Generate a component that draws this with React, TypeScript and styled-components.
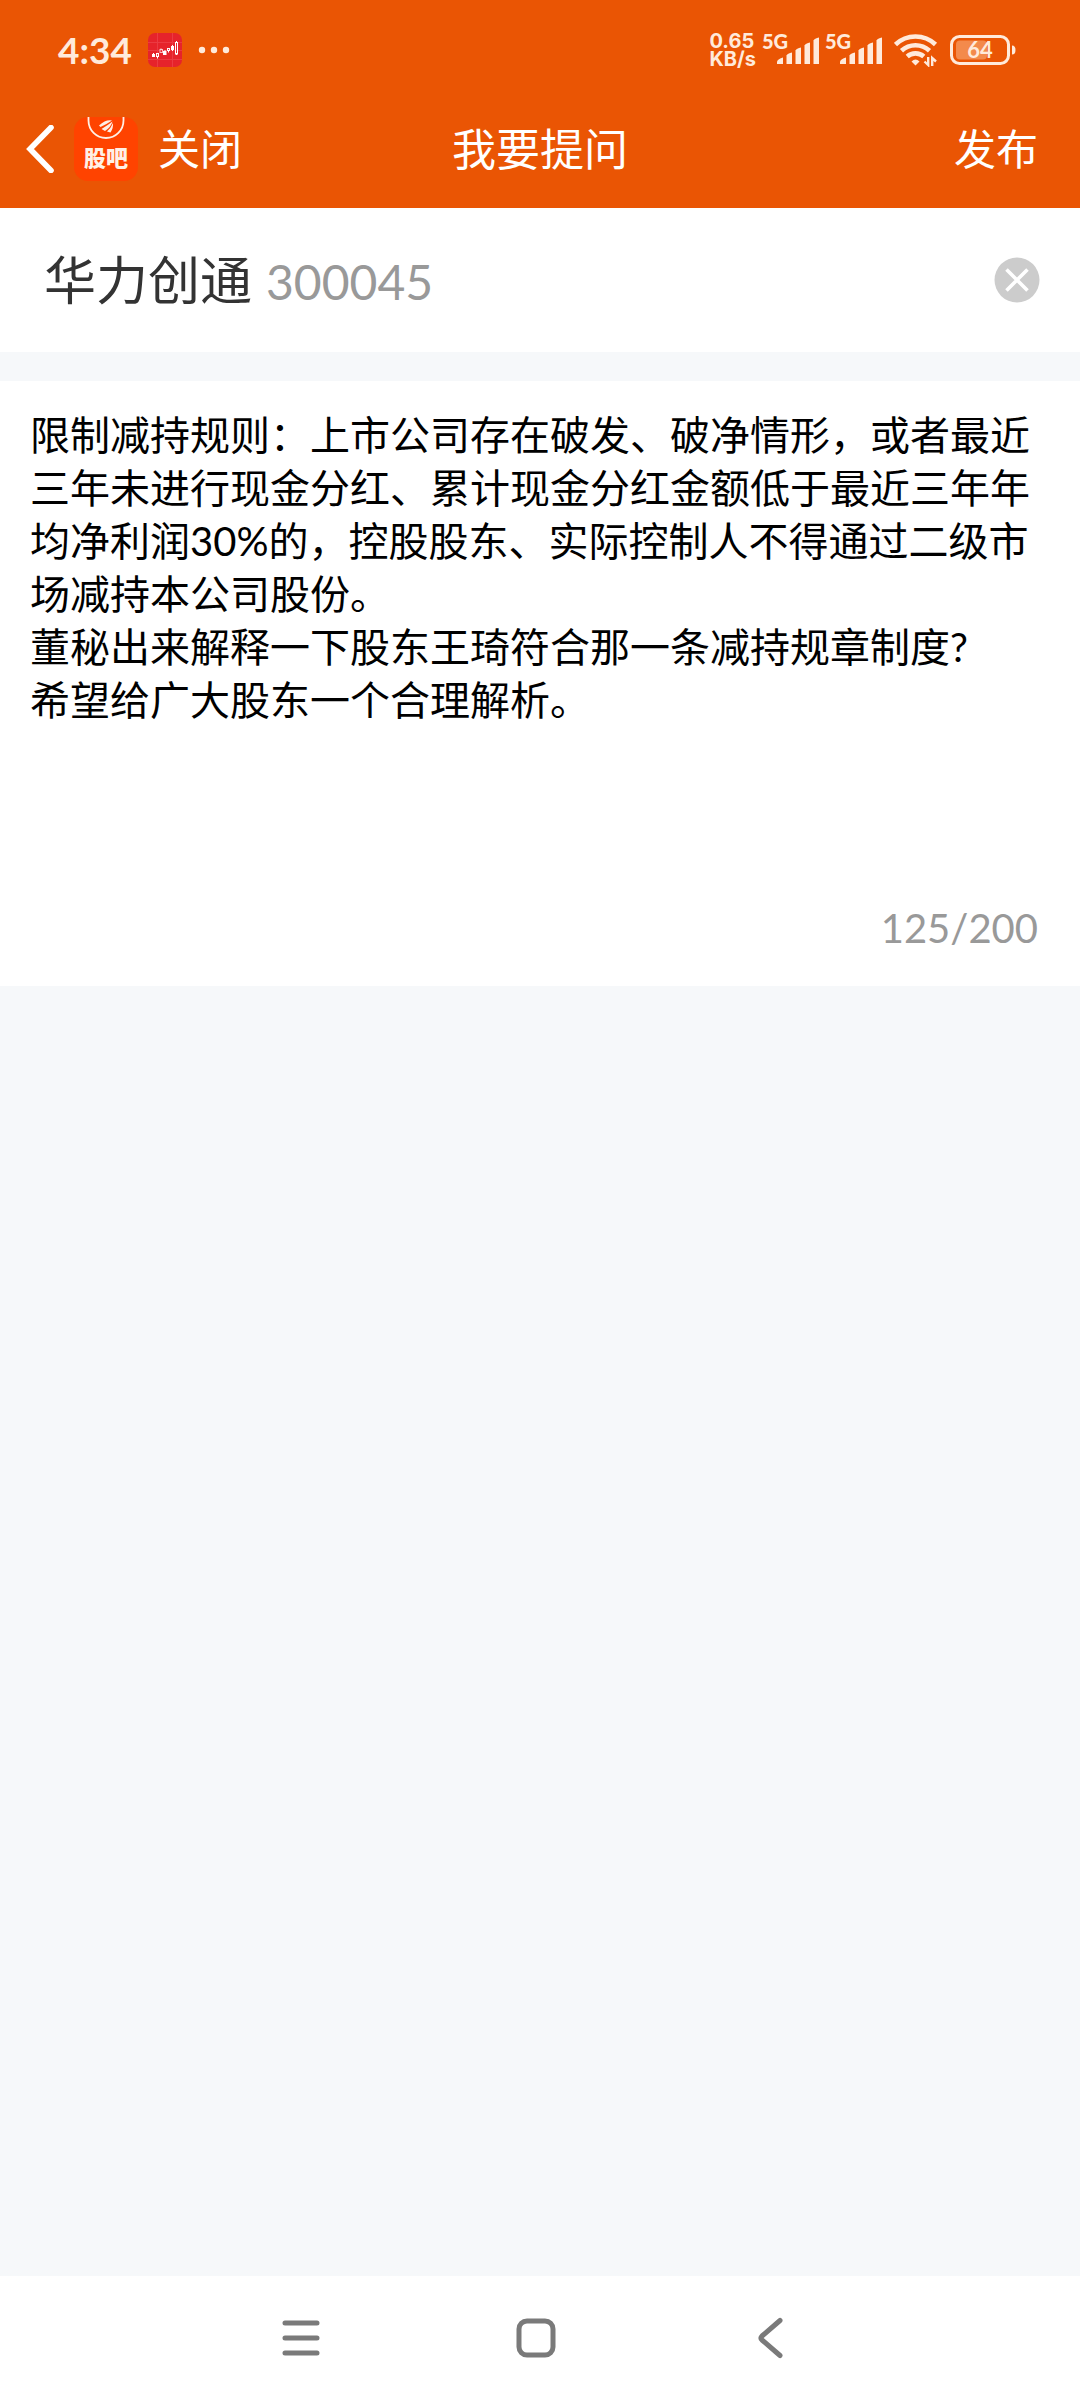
import React, { useState } from 'react';
import styled, { createGlobalStyle } from 'styled-components';

const GlobalStyle = createGlobalStyle`
  *, *::before, *::after { box-sizing: border-box; }
  body {
    margin: 0;
    background: #f6f8fa;
    font-family: Lato, "Noto Sans CJK SC", sans-serif;
  }
  button, textarea { font: inherit; }
`;

const Page = styled.div`
  display: flex;
  flex-direction: column;
  min-height: 100vh;
`;

const TopArea = styled.header`
  background: #ea5504;
  color: #fff;
`;

const StatusBar = styled.div`
  display: flex;
  align-items: center;
  justify-content: space-between;
  height: 88px;
  padding: 12px 64px 0 58px;
  color: #ffeadb;
`;

const StatusGroup = styled.div<{ $gap: number }>`
  display: flex;
  align-items: center;
  gap: ${(p) => p.$gap}px;
`;

const Clock = styled.time`
  font-size: 37px;
  line-height: 40px;
  font-weight: 700;
`;

const Speed = styled.div`
  display: flex;
  flex-direction: column;
  font-family: Inter, sans-serif;
  font-size: 20px;
  line-height: 18px;
  font-weight: 700;
`;

const Signal = styled.div`
  position: relative;
  display: flex;
  align-items: flex-end;
  justify-content: flex-end;
  width: 57px;
  height: 28px;
`;

const SignalLabel = styled.span`
  position: absolute;
  top: -5px;
  left: 0;
  font-size: 20px;
  line-height: 20px;
  font-weight: 900;
`;

const BatteryBox = styled.div`
  position: relative;
  display: flex;
`;

const BatteryText = styled.span`
  position: absolute;
  inset: 0 6px 0 0;
  text-align: center;
  font-size: 22px;
  line-height: 30px;
  font-weight: 700;
`;

const TitleBar = styled.div`
  display: grid;
  grid-template-columns: 1fr auto 1fr;
  align-items: center;
  height: 120px;
  padding: 2px 26px 0;
`;

const TitleStart = styled.div`
  display: flex;
  align-items: center;
`;

const Title = styled.h1`
  margin: 0;
  font-size: 44px;
  line-height: 60px;
  font-weight: 400;
`;

const PlainButton = styled.button`
  display: flex;
  align-items: center;
  padding: 0;
  border: 0;
  background: none;
  color: inherit;
  cursor: pointer;
`;

const TextButton = styled(PlainButton)`
  justify-self: end;
  padding-right: 16px;
  font-size: 42px;
  line-height: 60px;
`;

const ForumLogo = styled.a`
  display: flex;
  flex-direction: column;
  align-items: center;
  width: 64px;
  height: 64px;
  margin: 0 20px;
  border-radius: 14px;
  background: #ff4300;
  color: #fff0e6;
  font-size: 22px;
  line-height: 30px;
  font-weight: 800;
  text-decoration: none;
`;

const StockRow = styled.section`
  display: flex;
  align-items: center;
  justify-content: space-between;
  height: 144px;
  padding: 0 40px 0 44px;
  background: #fff;
`;

const Stock = styled.div`
  display: flex;
  align-items: baseline;
  gap: 14px;
`;

const StockName = styled.span`
  color: #333;
  font-size: 52px;
  line-height: 76px;
`;

const StockCode = styled.span`
  color: #999;
  font-size: 48px;
`;

const Editor = styled.section`
  display: flex;
  flex-direction: column;
  margin-top: 29px;
  padding: 28px 0 16px;
  background: #fff;
`;

const Question = styled.textarea`
  display: block;
  width: 100%;
  padding: 0 40px 0 30px;
  border: 0;
  outline: 0;
  resize: none;
  overflow: hidden;
  background: transparent;
  color: #000;
  font-size: 40px;
  line-height: 53px;
`;

const Counter = styled.output`
  padding-right: 42px;
  color: #999;
  font-size: 40px;
  line-height: 84px;
  text-align: right;
`;

const SystemNav = styled.nav`
  display: flex;
  align-items: center;
  justify-content: center;
  gap: 187px;
  height: 124px;
  margin-top: auto;
  padding-right: 8px;
  background: #fff;
  color: #7a7a7a;
`;

const initialText = [
  '限制减持规则：上市公司存在破发、破净情形，或者最近三年未进行现金分红、累计现金分红金额低于最近三年年均净利润30%的，控股股东、实际控制人不得通过二级市场减持本公司股份。',
  '董秘出来解释一下股东王琦符合那一条减持规章制度?',
  '希望给广大股东一个合理解析。',
].join('\n');

const StockAppIcon = () => (
  <svg width="34" height="34" viewBox="0 0 34 34" aria-hidden="true">
    <rect width="34" height="34" rx="7" fill="#e6232b" />
    <path d="M9.500 0V34M24.500 0V34M0 9.500H34M0 17.500H34M0 26.500H34" stroke="#f0525a" strokeWidth="1" opacity=".5" />
    <g stroke="#fff" strokeWidth="1" fill="none">
      <path d="M5.500 20v1M9.500 23.500v2M13 15.500v1M17 17v1M20.500 18v1.500M24.500 12v6M28.500 8v1M28.500 21v1" />
      <rect x="4.500" y="21.500" width="2" height="2" fill="#fff" />
      <rect x="8.500" y="20.500" width="2" height="3" />
      <rect x="12" y="16.500" width="2.500" height="3" opacity=".7" />
      <rect x="15.500" y="18.500" width="2.500" height="3" fill="#fff" />
      <rect x="19.500" y="15.500" width="2" height="2" />
      <rect x="23.500" y="13.500" width="2" height="3" fill="#fff" />
      <rect x="27.500" y="9.500" width="2" height="11.500" />
    </g>
  </svg>
);

const Dots = () => (
  <svg width="32" height="8" viewBox="0 0 32 8" fill="currentColor" aria-hidden="true">
    <circle cx="4" cy="4" r="3.200" />
    <circle cx="16" cy="4" r="3.200" />
    <circle cx="28" cy="4" r="3.200" />
  </svg>
);

const SignalBars = () => (
  <svg width="42" height="27" viewBox="0 0 42 27" fill="currentColor" aria-hidden="true">
    <path d="M0 27V24.500Q1 22 6 20.500V27Z" />
    <path d="M9.500 27V18.500Q10.500 16.500 15 15.500V27Z" />
    <path d="M18.500 27V13.500Q19.500 11.500 24 10.500V27Z" />
    <path d="M27.500 27V8.500Q28.500 6.500 33 5.500V27Z" />
    <path d="M36.500 27V3.500Q37.500 1.500 42 .5V27Z" />
  </svg>
);

const Wifi = () => (
  <svg width="44" height="34" viewBox="0 0 44 34" fill="none" stroke="currentColor" strokeWidth="4.600" aria-hidden="true">
    <path d="M1.500 11.500A29 29 0 0 1 41.500 11.500" />
    <path d="M7.500 17.800A20.500 20.500 0 0 1 35.500 17.800" />
    <path d="M13.200 23.500A12.500 12.500 0 0 1 29.800 23.500" />
    <path d="M17.500 28.500Q21.500 24.500 25.500 28.500L21.500 32.500Z" fill="currentColor" stroke="none" />
    <path d="M34.200 24V32L30.500 28.500M38.200 33V25L42 28.500" strokeWidth="2.400" />
  </svg>
);

const Battery = () => (
  <svg width="66" height="30" viewBox="0 0 66 30" aria-hidden="true">
    <rect x="6" y="5.500" width="31" height="19" rx="4" fill="#f38a4c" />
    <rect x="1.500" y="1.500" width="57" height="27" rx="8" fill="none" stroke="currentColor" strokeWidth="3" />
    <path d="M62 10.500Q65.500 10.500 65.500 15T62 19.500Z" fill="currentColor" />
  </svg>
);

const HeaderBack = () => (
  <svg width="28" height="48" viewBox="0 0 28 48" fill="none" stroke="currentColor" strokeWidth="5.600" aria-hidden="true">
    <path d="M25 2.500L4 24L25 45.500" strokeLinecap="round" />
  </svg>
);

const LogoMark = () => (
  <svg width="40" height="26" viewBox="0 0 40 26" fill="none" stroke="currentColor" strokeWidth="1.800" aria-hidden="true">
    <path d="M2.500 0V3.500A17.500 17.500 0 0 0 37.500 3.500V0" />
    <path d="M13 8.500Q20 2 26 3.500Q21 7 14.500 10ZM15.500 12Q22 8 26.500 4.500Q25 10 19 14ZM21 14.500Q25 11 27 6Q27.500 11 24.500 15.500Z" fill="currentColor" stroke="none" />
  </svg>
);

const ClearIcon = () => (
  <svg width="46" height="46" viewBox="0 0 46 46" aria-hidden="true">
    <circle cx="23" cy="23" r="22.500" fill="#ccc" />
    <path d="M12.500 12.500L33.500 33.500M33.500 12.500L12.500 33.500" stroke="#fff" strokeWidth="3.600" />
  </svg>
);

const NavIcon = ({ children }: { children: React.ReactNode }) => (
  <svg width="48" height="48" viewBox="0 0 48 48" fill="none" stroke="currentColor" strokeWidth="5" strokeLinecap="round" strokeLinejoin="round" aria-hidden="true">
    {children}
  </svg>
);

export default function App() {
  const [stock, setStock] = useState(true);
  const [text, setText] = useState(initialText);

  return (
    <Page>
      <GlobalStyle />
      <TopArea>
        <StatusBar>
          <StatusGroup $gap={16}>
            <Clock>4:34</Clock>
            <StockAppIcon />
            <Dots />
          </StatusGroup>
          <StatusGroup $gap={12}>
            <StatusGroup $gap={6}>
              <Speed>
                <span>0.65</span>
                <span>KB/s</span>
              </Speed>
              <Signal>
                <SignalLabel>5G</SignalLabel>
                <SignalBars />
              </Signal>
              <Signal>
                <SignalLabel>5G</SignalLabel>
                <SignalBars />
              </Signal>
            </StatusGroup>
            <Wifi />
            <BatteryBox>
              <Battery />
              <BatteryText>64</BatteryText>
            </BatteryBox>
          </StatusGroup>
        </StatusBar>
        <TitleBar>
          <TitleStart>
            <PlainButton type="button" aria-label="返回">
              <HeaderBack />
            </PlainButton>
            <ForumLogo href="#guba">
              <LogoMark />
              股吧
            </ForumLogo>
            <TextButton type="button">关闭</TextButton>
          </TitleStart>
          <Title>我要提问</Title>
          <TextButton type="button">发布</TextButton>
        </TitleBar>
      </TopArea>
      <main>
        <StockRow>
          {stock && (
            <>
              <Stock>
                <StockName>华力创通</StockName>
                <StockCode>300045</StockCode>
              </Stock>
              <PlainButton type="button" aria-label="清除" onClick={() => setStock(false)}>
                <ClearIcon />
              </PlainButton>
            </>
          )}
        </StockRow>
        <Editor>
          <Question
            id="question"
            aria-label="提问内容"
            rows={9}
            maxLength={200}
            spellCheck={false}
            value={text}
            onChange={(e) => setText(e.target.value)}
          />
          <Counter htmlFor="question">{text.length}/200</Counter>
        </Editor>
      </main>
      <SystemNav>
        <PlainButton type="button" aria-label="菜单">
          <NavIcon>
            <path d="M8 9H40M8 24H40M8 39H40" />
          </NavIcon>
        </PlainButton>
        <PlainButton type="button" aria-label="主页">
          <NavIcon>
            <rect x="7" y="7" width="34" height="34" rx="8" />
          </NavIcon>
        </PlainButton>
        <PlainButton type="button" aria-label="后退">
          <NavIcon>
            <path d="M33 6.500L15 22Q13 24 15 26L33 41.500" />
          </NavIcon>
        </PlainButton>
      </SystemNav>
    </Page>
  );
}
